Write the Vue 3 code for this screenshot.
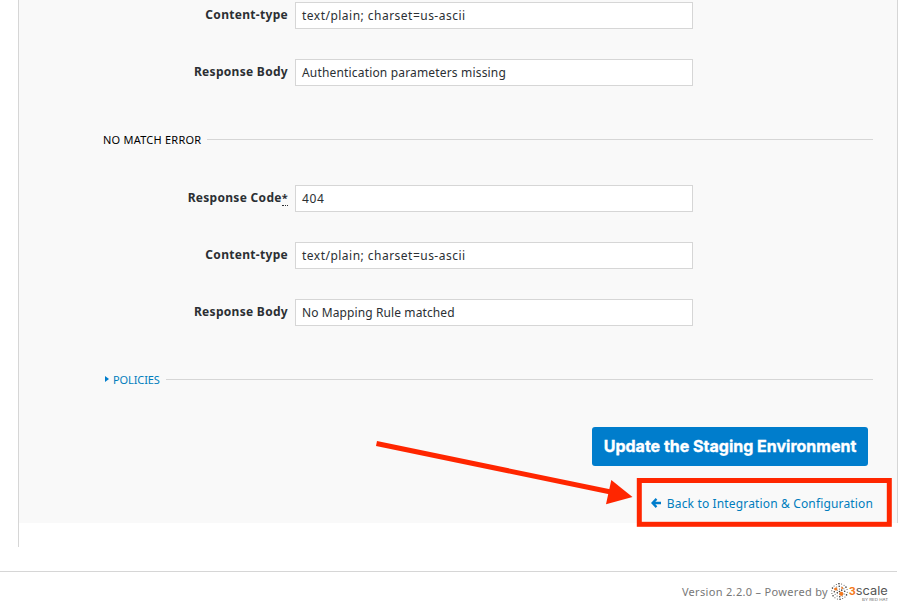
<script setup>
const groups = [
  {
    legend: '',
    fields: [
      { label: 'Content-type', value: 'text/plain; charset=us-ascii', kind: 'value-type' },
      { label: 'Response Body', value: 'Authentication parameters missing', kind: 'value-auth' },
    ],
  },
  {
    legend: 'NO MATCH ERROR',
    fields: [
      { label: 'Response Code', required: true, value: '404', kind: 'value-code' },
      { label: 'Content-type', value: 'text/plain; charset=us-ascii', kind: 'value-type' },
      { label: 'Response Body', value: 'No Mapping Rule matched', kind: 'value-match' },
    ],
  },
]

const dots = []
for (let ring = 0; ring < 4; ring++) {
  const count = ring === 0 ? 1 : ring * 6
  for (let i = 0; i < count; i++) {
    const a = (i / count) * Math.PI * 2 + ring * 0.5
    dots.push({
      x: 8.5 + Math.cos(a) * ring * 2.6,
      y: 8.5 + Math.sin(a) * ring * 2.6,
      r: (i + ring) % 3 === 0 ? 0.8 : 0.5,
    })
  }
}
</script>

<template>
  <div class="page">
    <main class="main">
      <form class="panel" @submit.prevent>
        <fieldset v-for="(group, g) in groups" :key="g" class="group">
          <div v-if="group.legend" class="legend">
            <span class="legend-text">{{ group.legend }}</span>
            <span class="line"></span>
          </div>
          <div v-for="(field, f) in group.fields" :key="f" class="row">
            <label class="label">{{ field.label }}<abbr v-if="field.required">*</abbr></label>
            <div class="input"><span :class="field.kind">{{ field.value }}</span></div>
          </div>
        </fieldset>

        <div class="legend policies">
          <svg class="caret" width="4" height="6" viewBox="0 0 4 6"><path d="M0 0L4 3L0 6Z" fill="#007dcc" /></svg>
          <span class="legend-text">POLICIES</span>
          <span class="line"></span>
        </div>

        <div class="actions">
          <button class="submit">Update the Staging Environment</button>
          <a class="back">
            <svg width="10" height="10" viewBox="0 0 10 10">
              <path d="M5.5 0.9L1.5 5L5.5 9.1M1.8 5H10" fill="none" stroke="#007dcc" stroke-width="2.3" />
            </svg>
            <span>Back to Integration &amp; Configuration</span>
          </a>
        </div>
      </form>
    </main>

    <footer class="footer">
      <span class="version">Version 2.2.0 – Powered by</span>
      <svg class="logo" width="58" height="20" viewBox="0 0 58 20">
        <circle v-for="(d, i) in dots" :key="i" :cx="d.x" :cy="d.y" :r="d.r" fill="#3c3c3c" />
        <circle cx="4.8" cy="6" r="1.6" fill="#f47a20" />
        <circle cx="10.3" cy="10.8" r="2.1" fill="#f47a20" />
        <circle cx="11.2" cy="5" r="1" fill="#f47a20" />
        <text x="17.8" y="12.2" class="three" textLength="7" lengthAdjust="spacingAndGlyphs">3</text>
        <text x="24.8" y="12.2" class="scale" textLength="32" lengthAdjust="spacingAndGlyphs">scale</text>
        <text x="31" y="18" class="redhat" textLength="26" lengthAdjust="spacingAndGlyphs">BY RED HAT</text>
      </svg>
    </footer>

    <svg class="annotation" width="916" height="607" viewBox="0 0 916 607">
      <path d="M376.5 443.5L612 492.3" stroke="#ff2600" stroke-width="5" />
      <path d="M611.3 480L632.5 497L606 504.2Z" fill="#ff2600" />
      <rect x="639.3" y="480.5" width="250" height="43.8" fill="none" stroke="#ff2600" stroke-width="5" />
    </svg>
  </div>
</template>

<style>
body {
  background: #fff;
}
</style>

<style scoped>
.page {
  position: relative;
  width: 916px;
  height: 607px;
  overflow: hidden;
  font-family: "Noto Sans", "Open Sans", sans-serif;
  font-size: 12px;
  color: #2b2f33;
}
.main {
  box-sizing: border-box;
  width: 880px;
  height: 547px;
  margin-left: 18px;
  border-left: 1px solid #d6d6d6;
}
.panel {
  box-sizing: border-box;
  height: 523px;
  padding: 2px 24px 0 84px;
  background: #f9f9f9;
  border-right: 1px solid #d6d6d6;
}
.group {
  margin: 0;
  padding: 0;
  border: 0;
}
.row {
  display: flex;
  gap: 7px;
  height: 27px;
  margin-bottom: 30px;
}
.label {
  width: 185px;
  line-height: 25px;
  text-align: right;
  font-weight: 700;
  white-space: nowrap;
  letter-spacing: 0.3px;
}
abbr {
  font-size: 11px;
  border-bottom: 1px dotted #2b2f33;
}
.input {
  box-sizing: border-box;
  width: 398px;
  padding-left: 6px;
  line-height: 26px;
  background: #fff;
  border: 1px solid #d6d6d6;
  white-space: nowrap;
}
.value-type {
  letter-spacing: 0.48px;
}
.value-auth {
  letter-spacing: 0.17px;
}
.value-code {
  letter-spacing: 0.6px;
}
.value-match {
  letter-spacing: 0.1px;
}
.legend {
  display: flex;
  align-items: center;
  height: 20px;
  margin: 13px 0 36px;
  color: #000;
  font-size: 11px;
  letter-spacing: 0.23px;
}
.line {
  flex: 1;
  height: 1px;
  margin-left: 6px;
  background: #d6d6d6;
}
.policies {
  color: #007dbd;
  margin: 13px 0 38px;
  letter-spacing: -0.1px;
}
.caret {
  margin: 0 4px 0 2px;
}
.actions {
  display: flex;
  flex-direction: column;
  align-items: flex-end;
}
.submit {
  width: 276px;
  height: 39px;
  margin-right: 5px;
  padding: 0 0 2px;
  border: 0;
  border-radius: 3px;
  background: #007dcc;
  color: #fff;
  font: 700 16px Inter, sans-serif;
  -webkit-text-stroke: 0.35px #fff;
  white-space: nowrap;
}
.back {
  display: flex;
  align-items: center;
  gap: 6px;
  height: 20px;
  margin-top: 27px;
  color: #007dbd;
  letter-spacing: 0.15px;
  white-space: nowrap;
}
.footer {
  display: flex;
  justify-content: flex-end;
  box-sizing: border-box;
  width: 897px;
  height: 36px;
  margin-top: 24px;
  padding: 11px 8px 0 0;
  border-top: 1px solid #d6d6d6;
  color: #777;
  font-size: 11px;
}
.version {
  margin-right: 3px;
  line-height: 18px;
  letter-spacing: 0.32px;
}
.logo {
  flex: none;
}
.logo text {
  font-family: Inter, sans-serif;
}
.logo .three {
  font-size: 10.5px;
  font-weight: 700;
  fill: #f47a20;
}
.logo .scale {
  font-size: 11.5px;
  fill: #555;
}
.logo .redhat {
  font-size: 3.6px;
  fill: #666;
}
.annotation {
  position: absolute;
  top: 0;
  left: 0;
  pointer-events: none;
}
</style>
